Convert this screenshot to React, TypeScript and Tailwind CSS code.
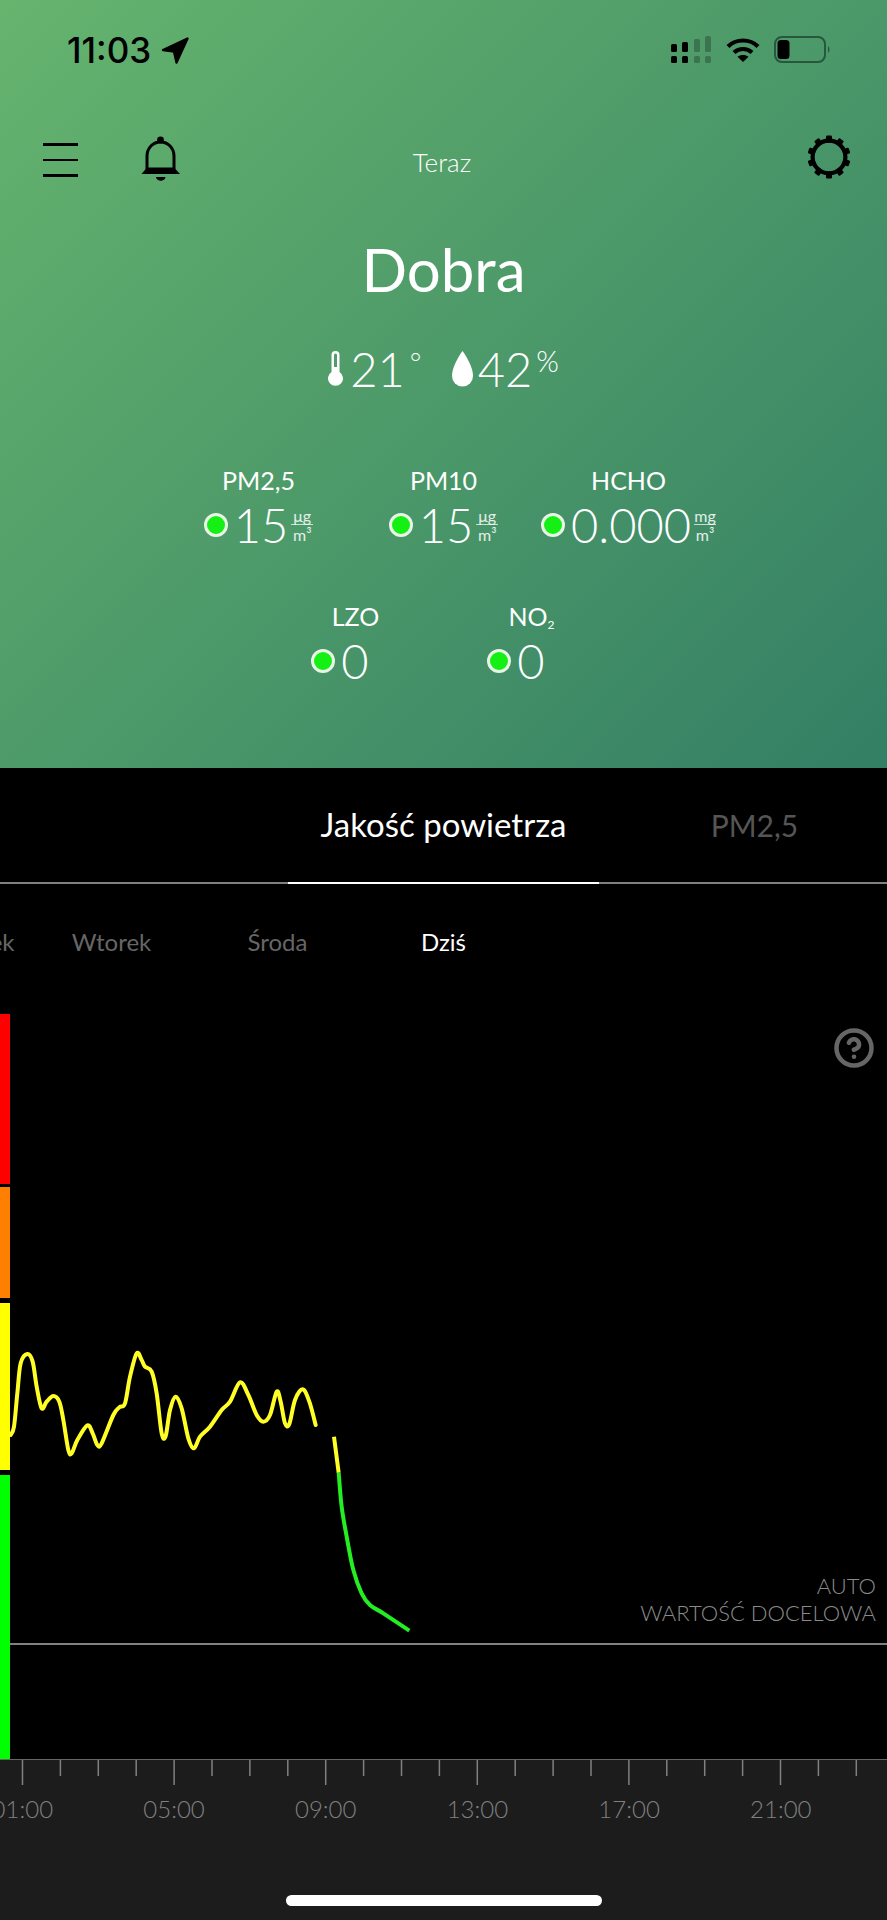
import { CircleHelp } from 'lucide-react';

// curve points traced from the chart, in chart pixels x3
const YELLOW_A: number[][] = [[32,345],[42,320],[52,220],[62,130],[82,102],[98,125],[110,200],[125,265],[140,245],[160,228],[178,245],[190,300],[205,390],[215,400],[232,360],[262,316],[278,340],[292,375],[305,370],[340,285],[358,262],[375,250],[390,170],[410,100],[425,120],[435,140],[455,155],[470,220],[485,340],[497,348],[510,270],[527,230],[545,265],[565,355],[582,385],[600,350],[630,320],[665,270],[690,245],[720,187],[745,225],[770,285],[790,305],[810,285],[830,215],[842,245],[855,310],[868,312],[885,240],[908,208],[928,245],[947,315]];
const YELLOW_B: number[][] = [[1002,350],[1016,458]];
const GREEN: number[][] = [[1016,458],[1025,560],[1040,650],[1060,750],[1085,820],[1110,855],[1150,880],[1228,932]];

function smooth(raw: number[][]) {
  const p = raw.map(([x, y]) => [x / 3, y / 3 + 306]);
  let d = `M${p[0][0]} ${p[0][1]}`;
  for (let i = 0; i < p.length - 1; i++) {
    const a = p[Math.max(i - 1, 0)];
    const b = p[i];
    const c = p[i + 1];
    const e = p[Math.min(i + 2, p.length - 1)];
    d += ` C${b[0] + (c[0] - a[0]) / 6} ${b[1] + (c[1] - a[1]) / 6} ${c[0] - (e[0] - b[0]) / 6} ${c[1] - (e[1] - b[1]) / 6} ${c[0]} ${c[1]}`;
  }
  return d;
}

function StatusIcons() {
  return (
    <div className="flex items-center">
      <svg width="41" height="28" viewBox="0 0 41 28" className="text-black">
        <rect x="0" y="8" width="6" height="8" rx="1.5" />
        <rect x="11" y="6" width="6" height="10" rx="1.5" />
        <rect x="23" y="3" width="6" height="13" rx="1.5" opacity="0.25" />
        <rect x="34" y="0" width="6" height="16" rx="1.5" opacity="0.25" />
        <rect x="0" y="20" width="6" height="7" rx="1.5" />
        <rect x="11" y="20" width="6" height="7" rx="1.5" />
        <rect x="23" y="20" width="6" height="7" rx="1.5" opacity="0.25" />
        <rect x="34" y="20" width="6" height="7" rx="1.5" opacity="0.25" />
      </svg>
      <svg width="34" height="26" viewBox="0 0 34 26" className="ml-[14px]" fill="none" stroke="#000" strokeWidth="4.2">
        <path d="M2 9.5C10 1.5 24 1.5 32 9.5" />
        <path d="M8 15.5C13 10.8 21 10.8 26 15.5" />
        <path d="M17 25L11.5 19.8C14.5 17.4 19.5 17.4 22.5 19.8Z" fill="#000" stroke="none" />
      </svg>
      <svg width="57" height="28" viewBox="0 0 57 28" className="ml-[14px]">
        <rect x="1" y="1" width="50" height="25" rx="7" fill="none" stroke="#27573c" strokeWidth="2" />
        <rect x="3.5" y="4" width="12" height="19" rx="3.5" fill="#000" />
        <path d="M54 10C56 11.5 56 15.5 54 17Z" fill="#27573c" />
      </svg>
    </div>
  );
}

function Bell() {
  return (
    <svg width="40" height="46" viewBox="0 0 40 46" className="ml-[63px] mt-[-3px]">
      <circle cx="19.5" cy="4" r="3.4" />
      <path d="M6 34V20C6 12 12 6 19.5 6S33 12 33 20V34" fill="none" stroke="#000" strokeWidth="3" />
      <path d="M0.5 38L6 31.5H33L39 38Z" />
      <path d="M15 41H24.5C24 46 15.5 46 15 41Z" />
    </svg>
  );
}

function Gear() {
  const teeth = [0, 36, 72, 108, 144, 180, 216, 252, 288, 324];
  return (
    <svg width="48" height="48" viewBox="0 0 48 48" className="mr-[34px] mt-[-7px]">
      <circle cx="24" cy="24" r="16.4" fill="none" stroke="#000" strokeWidth="4.2" />
      {teeth.map((a) => (
        <rect key={a} x="21" y="2.5" width="6" height="7" rx="1.2" transform={`rotate(${a} 24 24)`} />
      ))}
    </svg>
  );
}

function Dot() {
  return <span className="h-[24px] w-[24px] shrink-0 rounded-full border-[3px] border-[#e8f5e6] bg-[#14f014]" />;
}

function Unit({ top }: { top: string }) {
  return (
    <span className="ml-[3px] flex w-[22px] flex-col items-center text-[16px] leading-[15px] text-white/85">
      <span className="w-full border-b border-white/70 pb-[1px] text-center">{top}</span>
      <span className="pt-[2px]">m³</span>
    </span>
  );
}

function Metric({ label, value, unit, sub }: { label: string; value: string; unit?: string; sub?: boolean }) {
  return (
    <div className="flex w-[185px] shrink-0 flex-col items-center">
      <div className="h-[32px] text-[25px] leading-[32px]">
        {label}
        {sub && <sub className="text-[12px]">2</sub>}
      </div>
      <div className={unit ? 'mt-[4px] flex items-center' : 'mt-[4px] flex items-center pr-[31px]'}>
        <Dot />
        <span className="ml-[6px] text-[47px] font-light leading-[50px]">{value}</span>
        {unit && <Unit top={unit} />}
      </div>
    </div>
  );
}

function Chart() {
  return (
    <div className="relative flex h-[745px] bg-black">
      <div className="flex w-[10px] shrink-0 flex-col">
        <div className="h-[170px] bg-[#ff0000]" />
        <div className="mt-[3px] h-[111px] bg-[#ff8000]" />
        <div className="mt-[5px] h-[167px] bg-[#ffff00]" />
        <div className="mt-[5px] h-[284px] bg-[#00ff00]" />
      </div>
      <div className="flex flex-1 flex-col">
        <div className="mt-[13px] flex justify-end pr-[12px]">
          <CircleHelp size={42} strokeWidth={2.6} className="text-[#666666]" />
        </div>
        <div className="mt-[503px] flex flex-col items-end pr-[11px] text-[22px] font-light leading-[27px] text-[#8a8a8a]">
          <span>AUTO</span>
          <span>WARTOŚĆ DOCELOWA</span>
        </div>
        <div className="mt-[17px] h-[2px] bg-[#808080]" />
      </div>
      <svg className="absolute inset-0" width="887" height="745" viewBox="0 0 887 745" fill="none" strokeWidth="4">
        <path d={smooth(YELLOW_A)} stroke="#ffff26" strokeLinecap="round" />
        <path d={smooth(YELLOW_B)} stroke="#ffff26" />
        <path d={smooth(GREEN)} stroke="#22ee22" />
      </svg>
    </div>
  );
}

function Axis() {
  const ticks = Array.from({ length: 23 }, (_, i) => i);
  const hours = ['01:00', '05:00', '09:00', '13:00', '17:00', '21:00'];
  return (
    <div className="flex flex-1 flex-col overflow-hidden border-t border-[#666666] bg-[#1c1c1c]">
      <svg width="887" height="26" viewBox="0 0 887 26" className="shrink-0">
        {ticks.map((i) => {
          const x = 22.5 + i * 37.9;
          return <line key={i} x1={x} x2={x} y1="0" y2={i % 4 === 0 ? 25 : 16} stroke="#808080" strokeWidth="1.5" />;
        })}
      </svg>
      <div className="ml-[-53.5px] mt-[7px] flex text-[24px] font-light leading-[32px] text-[#808080]">
        {hours.map((h) => (
          <span key={h} className="w-[151.7px] shrink-0 text-center">
            {h}
          </span>
        ))}
      </div>
      <div className="mx-auto mt-[70px] h-[11px] w-[316px] rounded-[6px] bg-white" />
    </div>
  );
}

export default function App() {
  return (
    <div className="flex h-[1920px] w-full flex-col overflow-hidden bg-black font-['Lato',sans-serif] text-white">
      <header className="flex h-[768px] shrink-0 flex-col bg-[linear-gradient(135deg,#66b46e,#337f65)]">
        <div className="mt-[36px] flex h-[28px] items-center justify-between pl-[67px] pr-[56px] text-black">
          <div className="flex items-center">
            <span className="font-['Inter',sans-serif] text-[35px] font-medium leading-[28px]">11:03</span>
            <svg width="28" height="27" viewBox="0 0 28 27" className="ml-[10px]">
              <path d="M26.5 1.5L2 13L13 14.5L15.5 25.5Z" stroke="#000" strokeWidth="2.4" strokeLinejoin="round" />
            </svg>
          </div>
          <StatusIcons />
        </div>
        <div className="mt-[76px] flex h-[40px] items-center pl-[43px]">
          <div className="flex w-[35px] flex-col gap-[13px]">
            <div className="h-[2.5px] bg-black" />
            <div className="h-[2.5px] bg-black" />
            <div className="h-[2.5px] bg-black" />
          </div>
          <Bell />
          <div className="flex-1 pr-[102px] pt-[4px] text-center text-[26px] font-light">Teraz</div>
          <Gear />
        </div>
        <h1 className="mt-[54px] text-center text-[60px] font-normal leading-[70px]">Dobra</h1>
        <div className="mt-[40px] flex h-[50px] items-center justify-center">
          <svg width="15" height="36" viewBox="0 0 15 36" fill="#fff">
            <path fillRule="evenodd" d="M3.5 4a4 4 0 0 1 8 0V21a7.5 7.5 0 1 1-8 0ZM6 4a1.5 1.5 0 0 1 3 0V16H6Z" />
          </svg>
          <span className="ml-[7px] text-[47px] font-light leading-[50px]">21</span>
          <span className="mb-[14px] ml-[5px] w-[42px] text-[28px] font-light leading-[30px]">°</span>
          <svg width="21" height="36" viewBox="0 0 21 36" fill="#fff">
            <path d="M10.5 0C10.5 0 0 14 0 25A10.5 10.5 0 0 0 21 25C21 14 10.5 0 10.5 0Z" />
          </svg>
          <span className="ml-[5px] text-[47px] font-light leading-[50px]">42</span>
          <span className="mb-[16px] ml-[4px] text-[29px] font-light leading-[26px]">%</span>
        </div>
        <div className="mt-[70px] flex justify-center">
          <Metric label="PM2,5" value="15" unit="μg" />
          <Metric label="PM10" value="15" unit="μg" />
          <Metric label="HCHO" value="0.000" unit="mg" />
        </div>
        <div className="mt-[50px] flex justify-center">
          <div className="mr-[-9px]">
            <Metric label="LZO" value="0" />
          </div>
          <Metric label="NO" value="0" sub />
        </div>
      </header>
      <nav className="flex h-[116px] shrink-0 justify-center border-b-2 border-[#808080] text-[30px]">
        <div className="flex w-[311px] shrink-0" />
        <div className="mb-[-2px] flex w-[311px] shrink-0 items-center justify-center border-b-2 border-white text-[33px]">
          Jakość powietrza
        </div>
        <div className="flex w-[311px] shrink-0 items-center justify-center text-[#555555]">PM2,5</div>
      </nav>
      <div className="flex h-[130px] shrink-0 justify-center pt-[43px] text-[24px] leading-[30px] text-[#666666]">
        <span className="w-[166px] shrink-0 whitespace-nowrap pr-[14px] text-right">Poniedziałek</span>
        <span className="w-[166px] shrink-0 text-center">Wtorek</span>
        <span className="w-[166px] shrink-0 text-center">Środa</span>
        <span className="w-[166px] shrink-0 text-center text-white">Dziś</span>
        <span className="w-[166px] shrink-0" />
        <span className="w-[166px] shrink-0" />
        <span className="w-[166px] shrink-0" />
      </div>
      <Chart />
      <Axis />
    </div>
  );
}
